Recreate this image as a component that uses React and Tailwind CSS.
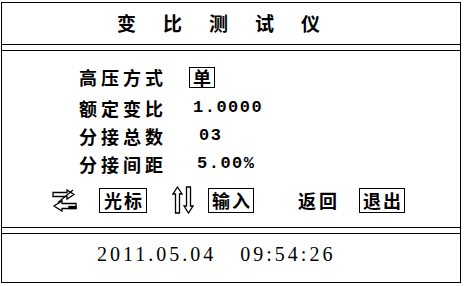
import React from 'react';

const cjk = { fontFamily: '"Noto Sans CJK SC", "Noto Sans", sans-serif' };

// 左右切换箭头
const SwapIcon = () => (
  <svg width="25" height="25" viewBox="0 0 25 25" fill="none" stroke="black" strokeWidth="1.3">
    <path d="M1 4.5 H15 V2 L22 6.5 L15 11 V8.5 H1 Z" />
    <path d="M21 2 L6 14.5" />
    <path d="M24 15.5 H10 V13 L2 18 L10 23 V20.5 H24 Z" />
    <rect x="17" y="18.5" width="7" height="2" fill="black" />
  </svg>
);

// 上下箭头
const UpDownIcon = () => (
  <svg width="22" height="28" viewBox="0 0 22 28" fill="none" stroke="black" strokeWidth="1.3">
    <path d="M5.5 1 L10 8 H7.5 V27 H3.5 V8 H1 Z" />
    <path d="M16.5 27 L21 20 H18.5 V1 H14.5 V20 H12 Z" />
  </svg>
);

const BoxText = ({ children, w }) => (
  <div className={`flex items-center justify-center gap-[2px] border border-black h-[25px] text-[18px] font-bold ${w}`} style={cjk}>
    {children}
  </div>
);

const Row = ({ label, children, extra }) => (
  <div className={`flex items-center h-[28px] ${extra}`}>
    <span className="w-[110px] text-[18px] font-bold tracking-[4px] leading-none" style={cjk}>{label}</span>
    {children}
  </div>
);

const mono = { fontFamily: '"Liberation Mono", monospace' };

export default function App() {
  return (
    <div className="w-[469px] h-[286px] bg-white text-black">
      <div className="ml-[1px] pt-[2px]">
        <div className="w-[460px] h-[281px] border border-black flex flex-col">
          {/* 标题 */}
          <div className="h-[42px] border-b border-black flex items-center pl-[115px] gap-[27px] text-[19px] font-bold" style={cjk}>
            <span>变</span><span>比</span><span>测</span><span>试</span><span>仪</span>
          </div>
          <div className="h-[6px] border-b border-black" />

          {/* 主体 */}
          <div className="h-[177px] border-b border-black pl-[77px] pt-[12px]">
            <Row label="高压方式">
              <div className="w-[26px] h-[21px] border border-black flex items-center justify-center text-[18px] font-bold leading-none" style={cjk}>单</div>
            </Row>
            <Row label="额定变比" extra="mt-[3px]">
              <span className="ml-[4px] text-[17px] font-bold tracking-[1.5px]" style={mono}>1.0000</span>
            </Row>
            <Row label="分接总数">
              <span className="ml-[10px] text-[17px] font-bold tracking-[1.5px]" style={mono}>03</span>
            </Row>
            <Row label="分接间距">
              <span className="ml-[8px] text-[17px] font-bold tracking-[1.5px]" style={mono}>5.00%</span>
            </Row>

            <div className="flex items-center h-[26px] mt-[9px] -ml-[27px]">
              <SwapIcon />
              <div className="ml-[22px]"><BoxText w="w-[48px]"><span>光</span><span>标</span></BoxText></div>
              <div className="ml-[25px]"><UpDownIcon /></div>
              <div className="ml-[14px]"><BoxText w="w-[46px]"><span>输</span><span>入</span></BoxText></div>
              <div className="ml-[44px] flex gap-[3px] text-[18px] font-bold" style={cjk}><span>返</span><span>回</span></div>
              <div className="ml-[22px]"><BoxText w="w-[46px]"><span>退</span><span>出</span></BoxText></div>
            </div>
          </div>
          <div className="h-[6px] border-b border-black" />

          {/* 日期时间 */}
          <div className="flex-1 pl-[95px] pt-[5px] text-[20px] tracking-[3px] text-black" style={{ fontFamily: '"Liberation Serif", serif' }}>
            <span>2011.05.04</span>
            <span className="ml-[24px]">09:54:26</span>
          </div>
        </div>
      </div>
    </div>
  );
}
